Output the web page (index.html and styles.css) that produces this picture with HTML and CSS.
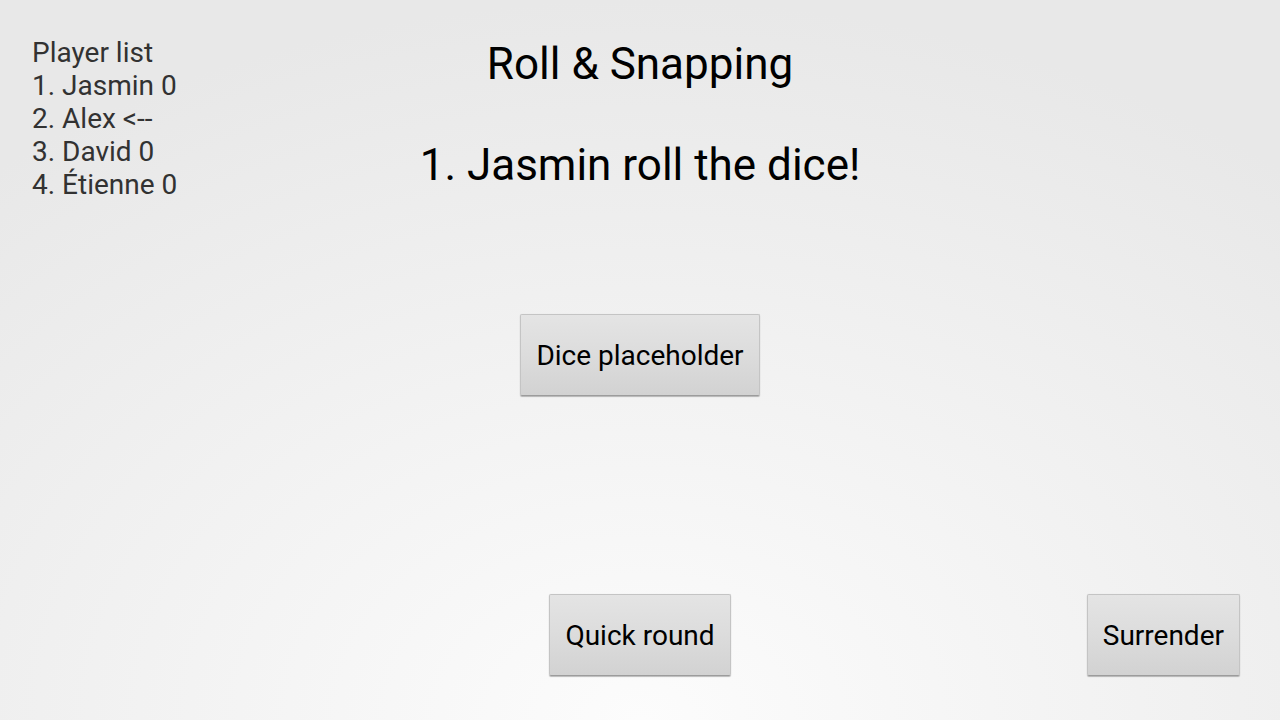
FILE: index.html
```html
<!DOCTYPE html>
<html lang="en">
<head>
<meta charset="utf-8">
<title>Roll &amp; Snapping</title>
<link rel="stylesheet" href="styles.css">
</head>
<body>
<div class="screen">
  <div class="top-row">
    <div class="player-list">
      <div class="line">Player list</div>
      <div class="line">1. Jasmin 0</div>
      <div class="line">2. Alex &lt;--</div>
      <div class="line">3. David 0</div>
      <div class="line">4. Étienne 0</div>
    </div>
    <div class="header">
      <div class="title">Roll &amp; Snapping</div>
      <div class="prompt">1. Jasmin roll the dice!</div>
    </div>
    <div class="spacer"></div>
  </div>
  <div class="dice-row">
    <button class="btn">Dice placeholder</button>
  </div>
  <div class="bottom-row">
    <div class="spacer"></div>
    <button class="btn">Quick round</button>
    <div class="right-cell">
      <button class="btn">Surrender</button>
    </div>
  </div>
</div>
</body>
</html>
```

FILE: styles.css
```css
html, body {
  margin: 0;
  padding: 0;
}

body {
  width: 1280px;
  height: 720px;
  overflow: hidden;
  font-family: Roboto, "Noto Sans", sans-serif;
  background: radial-gradient(ellipse 1000px 720px at 50% 100%, #fcfcfc 0%, #f4f4f4 40%, #e8e8e8 100%);
}

.screen {
  height: 720px;
  display: flex;
  flex-direction: column;
}

.top-row {
  display: grid;
  grid-template-columns: 1fr auto 1fr;
  align-items: start;
}

.player-list {
  padding: 36px 0 0 32px;
  font-size: 28px;
  line-height: 33px;
  color: #323232;
}

.header {
  padding-top: 38px;
  text-align: center;
  color: #000;
}

.title {
  font-size: 44px;
  line-height: 52px;
}

.prompt {
  margin-top: 49px;
  font-size: 44px;
  line-height: 52px;
}

.dice-row {
  display: flex;
  justify-content: center;
  margin-top: 113px;
}

.bottom-row {
  margin-top: auto;
  padding-bottom: 44px;
  display: grid;
  grid-template-columns: 1fr auto 1fr;
  align-items: end;
}

.right-cell {
  display: flex;
  justify-content: flex-end;
  padding-right: 40px;
}

.btn {
  box-sizing: border-box;
  height: 82px;
  padding: 0 15px;
  font-family: Roboto, "Noto Sans", sans-serif;
  font-size: 28px;
  color: #000;
  background: linear-gradient(to bottom, #e4e4e4 0%, #dcdcdc 50%, #d2d2d2 100%);
  border: 1px solid #c4c4c4;
  border-bottom-color: #9c9c9c;
  border-radius: 2px;
  box-shadow: 0 1px 1px rgba(0, 0, 0, 0.25), 0 0 1px rgba(0, 0, 0, 0.1);
  cursor: pointer;
}
```
